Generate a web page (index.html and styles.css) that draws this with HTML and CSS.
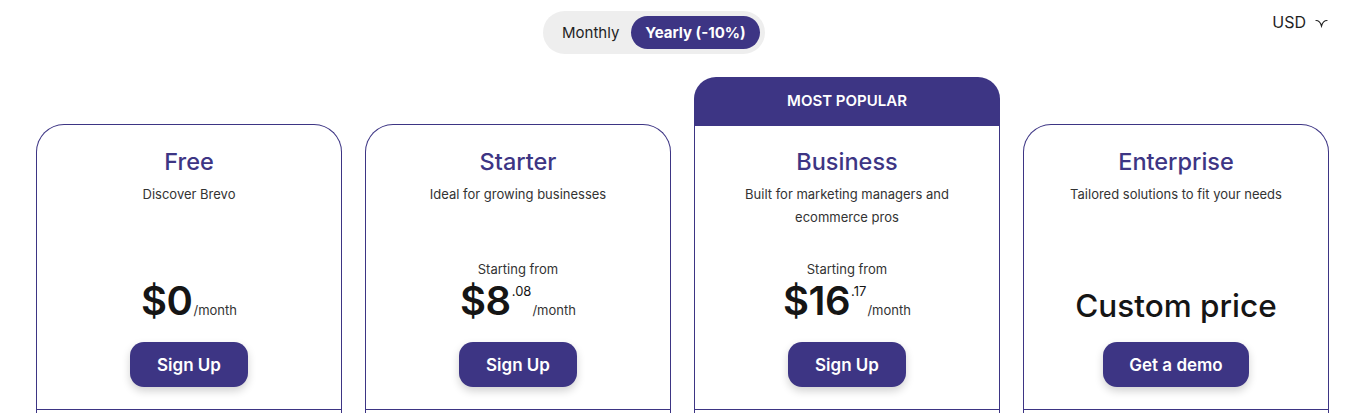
FILE: index.html
```html
<!DOCTYPE html>
<html lang="en">
<head>
<meta charset="utf-8">
<title>Pricing</title>
<link rel="stylesheet" href="styles.css">
</head>
<body>
<header class="top">
  <div></div>
  <div class="toggle">
    <button class="opt">Monthly</button>
    <button class="opt active">Yearly (-10%)</button>
  </div>
  <div class="currency">
    <span>USD</span>
    <svg class="chev" width="13" height="10" viewBox="0 0 13 10"><path d="M1 2.5 C3.5 2.5 5.5 4.5 6.5 8 C7.5 4.5 9.5 2.5 12 2.5" fill="none" stroke="#222" stroke-width="1.2" stroke-linecap="round"/></svg>
  </div>
</header>
<main class="plans">
  <div class="col">
    <div class="banner-slot"></div>
    <section class="card">
      <h2 class="name">Free</h2>
      <p class="desc">Discover Brevo</p>
      <div class="price-area">
        <div class="price"><span class="amt">$0</span><span class="per">/month</span></div>
      </div>
      <button class="cta">Sign Up</button>
      <div class="divider"></div>
    </section>
  </div>
  <div class="col">
    <div class="banner-slot"></div>
    <section class="card">
      <h2 class="name">Starter</h2>
      <p class="desc">Ideal for growing businesses</p>
      <div class="price-area">
        <div class="from">Starting from</div>
        <div class="price"><span class="amt">$8</span><span class="cents">.08</span><span class="per">/month</span></div>
      </div>
      <button class="cta">Sign Up</button>
      <div class="divider"></div>
    </section>
  </div>
  <div class="col">
    <div class="banner-slot banner">MOST POPULAR</div>
    <section class="card popular">
      <h2 class="name">Business</h2>
      <p class="desc">Built for marketing managers and ecommerce pros</p>
      <div class="price-area">
        <div class="from">Starting from</div>
        <div class="price"><span class="amt">$16</span><span class="cents">.17</span><span class="per">/month</span></div>
      </div>
      <button class="cta">Sign Up</button>
      <div class="divider"></div>
    </section>
  </div>
  <div class="col">
    <div class="banner-slot"></div>
    <section class="card">
      <h2 class="name">Enterprise</h2>
      <p class="desc">Tailored solutions to fit your needs</p>
      <div class="price-area">
        <div class="custom">Custom price</div>
      </div>
      <button class="cta wide">Get a demo</button>
      <div class="divider"></div>
    </section>
  </div>
</main>
</body>
</html>
```

FILE: styles.css
```css
* { box-sizing: border-box; }
html, body { margin: 0; padding: 0; background: #fff; }
body {
  font-family: Inter, "Noto Sans", "Liberation Sans", sans-serif;
  color: #1f1f1f;
  overflow: hidden;
  height: 413px;
}
.top {
  display: grid;
  grid-template-columns: 543px auto 1fr;
  align-items: start;
  padding-top: 11px;
  height: 77px;
}
.toggle {
  display: flex;
  align-items: center;
  background: #eeeeee;
  border-radius: 22px;
  height: 43px;
  padding: 0 5px;
  gap: 0;
}
.opt {
  font-family: inherit;
  border: 0;
  background: transparent;
  font-size: 15px;
  color: #1f1f1f;
  height: 33px;
  padding: 0 12px 0 14px;
  border-radius: 17px;
  white-space: nowrap;
  cursor: pointer;
}
.opt.active {
  background: #3d3584;
  color: #fff;
  font-weight: 700;
  padding: 0 14px;
}
.currency {
  justify-self: end;
  margin-right: 32px;
  display: flex;
  align-items: center;
  gap: 9px;
  font-size: 16px;
  color: #1f1f1f;
  height: 22px;
}
.chev { margin-top: 1px; }
.plans {
  display: grid;
  grid-template-columns: repeat(4, 306px);
  gap: 23px;
  padding-left: 36px;
}
.col { display: flex; flex-direction: column; }
.banner-slot { height: 47px; }
.banner {
  height: 49px;
  margin-bottom: -2px;
  background: #3d3584;
  color: #fff;
  border-radius: 22px 22px 0 0;
  font-size: 15px;
  font-weight: 600;
  display: flex;
  align-items: center;
  justify-content: center;
  padding-bottom: 2px;
}
.card {
  border: 1px solid #3d3584;
  border-bottom: 0;
  border-radius: 28px 28px 0 0;
  display: flex;
  flex-direction: column;
  align-items: center;
  padding-top: 23px;
  height: 300px;
  text-align: center;
}
.card.popular {
  border-top: 0;
  border-radius: 0;
  padding-top: 24px;
}
.name {
  margin: 0;
  font-size: 23.5px;
  line-height: 28px;
  font-weight: 500;
  color: #3d3584;
}
.desc {
  margin: 7px 0 0;
  font-size: 13px;
  line-height: 23px;
  color: #333;
  height: 46px;
  padding: 0 40px;
}
.price-area {
  height: 101px;
  display: flex;
  flex-direction: column;
  justify-content: flex-end;
  align-items: center;
}
.from {
  font-size: 13px;
  line-height: 18px;
  color: #333;
  margin-bottom: 3px;
}
.price {
  color: #151515;
  line-height: 40px;
  white-space: nowrap;
}
.amt {
  font-size: 40px;
  font-weight: 600;
  letter-spacing: -0.5px;
  vertical-align: baseline;
}
.cents {
  font-size: 13px;
  line-height: 20px;
  vertical-align: top;
  margin-left: 1px;
}
.per {
  font-size: 13px;
  color: #333;
  margin-left: 1px;
}
.custom {
  font-size: 31.5px;
  font-weight: 500;
  color: #151515;
  line-height: 40px;
  margin-bottom: 4px;
}
.cta {
  font-family: inherit;
  margin-top: 12px;
  height: 45px;
  padding: 0 27px;
  border: 0;
  border-radius: 14px;
  background: #3d3584;
  color: #fff;
  font-size: 17px;
  font-weight: 600;
  box-shadow: 0 4px 8px rgba(0, 0, 0, 0.18);
  cursor: pointer;
}
.cta.wide { padding: 0 26px; }
.divider {
  margin-top: 22px;
  align-self: stretch;
  border-top: 1px solid #3d3584;
}
```
